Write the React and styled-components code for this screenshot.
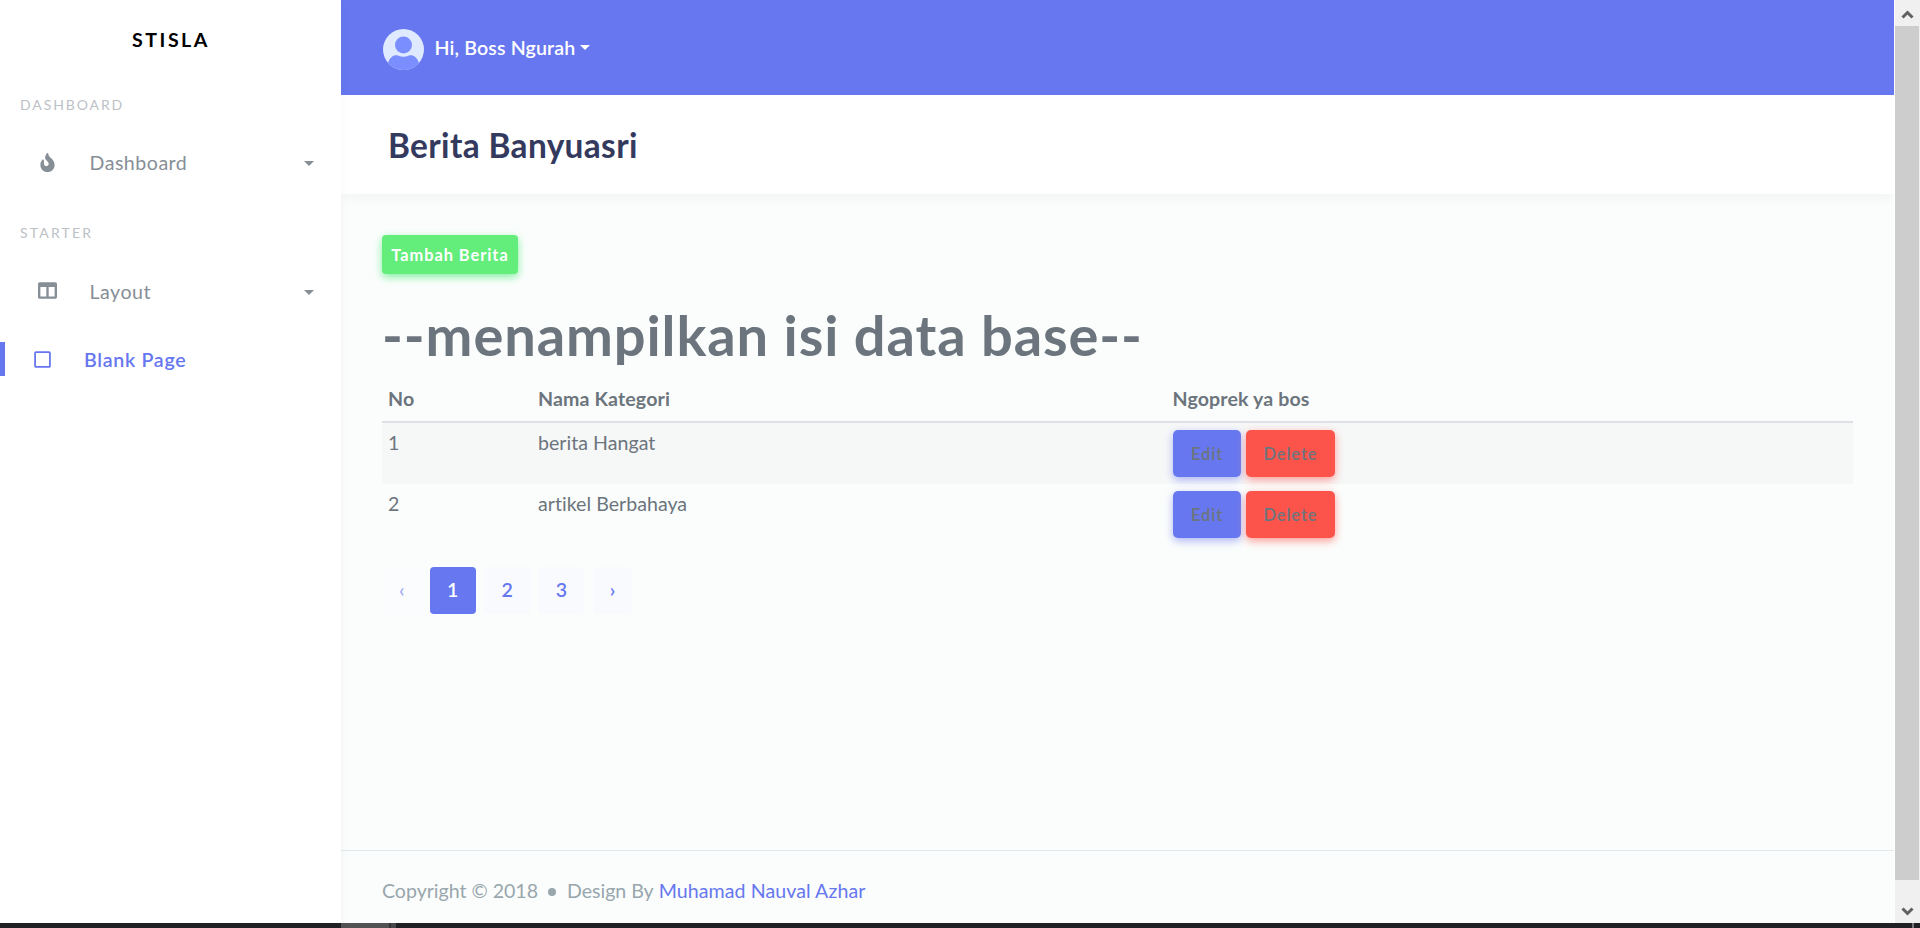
import React from "react";
import styled, { createGlobalStyle, css } from "styled-components";
import { FaFire, FaColumns, FaRegSquare } from "react-icons/fa";

const Global = createGlobalStyle`
  *, *::before, *::after { box-sizing: border-box; }
  body {
    margin: 0;
    overflow: hidden;
    font-family: Lato, "Open Sans", sans-serif;
    font-size: 19.6px;
    line-height: 28px;
    color: #6c757d;
    background: #fff;
  }
`;

const Screen = styled.div`
  display: flex;
  flex-direction: column;
  height: 928px;
`;
const Page = styled.div`
  display: flex;
  height: 923px;
`;

const Sidebar = styled.aside`
  position: relative;
  width: 341px;
  flex: none;
  background: #fff;
  box-shadow: 0 5px 11px rgba(0, 0, 0, 0.04);
`;
const Brand = styled.div`
  height: 81px;
  padding-left: 1px;
  line-height: 79px;
  text-align: center;
  font-size: 19.6px;
  font-weight: 700;
  letter-spacing: 2.5px;
  color: #000;
`;
const MenuHeader = styled.div`
  height: ${(p) => (p.$first ? 48 : 61)}px;
  padding: ${(p) => (p.$first ? 0 : 12)}px 20px 0;
  line-height: 48px;
  font-size: 14px;
  letter-spacing: ${(p) => (p.$first ? 1.9 : 2.2)}px;
  color: #bcc1c6;
`;
const MenuItem = styled.a`
  display: flex;
  align-items: center;
  height: 68px;
  padding: 0 27px 0 27px;
  letter-spacing: 0.5px;
  color: #868e96;
  ${(p) =>
    p.$active &&
    css`
      padding-left: 0;
      font-weight: 600;
      letter-spacing: 0.7px;
      color: #6777ef;
      &::before {
        content: "";
        width: 5px;
        height: 34px;
        margin: -2px 16.5px 0 0;
        background: #6777ef;
      }
    `}
`;
const IconSlot = styled.span`
  display: flex;
  justify-content: center;
  width: 41px;
  margin: -${(p) => p.$lift || 0}px 21.5px 0 0;
  svg { display: block; width: auto; height: 19px; }
`;
const MenuLabel = styled.span`
  flex: 1;
`;
const Caret = styled.span`
  border: 5.7px solid transparent;
  border-top-color: currentColor;
  border-bottom: 0;
`;

const Main = styled.main`
  display: flex;
  flex-direction: column;
  width: 1553px;
  flex: none;
  background: #fbfdfc;
`;
const Navbar = styled.header`
  display: flex;
  height: 95px;
  flex: none;
  padding: 29px 0 0 42px;
  background: #6777ef;
`;
const User = styled.div`
  display: flex;
  height: 41px;
  color: #fff;
  font-weight: 600;
  letter-spacing: 0.13px;
`;
const Avatar = styled.svg`
  width: 41px;
  height: 41px;
  margin-right: 10.5px;
`;
const UserName = styled.div`
  display: flex;
  align-items: center;
  gap: 5px;
  height: 37px;
`;
const TitleBar = styled.section`
  height: 99px;
  flex: none;
  padding-left: 47px;
  background: #fff;
  box-shadow: 0 5px 11px rgba(0, 0, 0, 0.035);
`;
const Title = styled.h1`
  margin: 0;
  font-size: 33.4px;
  line-height: 101px;
  font-weight: 700;
  letter-spacing: 0.36px;
  color: #34395e;
`;
const Content = styled.section`
  flex: 1;
  padding: 41px 41px 0;
`;
const tones = {
  primary: ["#6777ef", "#acb5f6"],
  danger: ["#fc544b", "#fd9b96"],
  success: ["#63ed7a", "#81f0a0"],
};
const Button = styled.a`
  display: flex;
  align-items: center;
  justify-content: center;
  height: ${(p) => (p.$small ? 39 : 47)}px;
  width: ${(p) => p.$w}px;
  border-radius: ${(p) => (p.$small ? 4 : 5)}px;
  font-size: 16.4px;
  font-weight: ${(p) => (p.$small ? 700 : 600)};
  letter-spacing: 0.95px;
  color: ${(p) => (p.$small ? "#fff" : "inherit")};
  background: ${(p) => tones[p.$tone][0]};
  box-shadow: 0 3px 8px ${(p) => tones[p.$tone][1]};
`;
const Headline = styled.h2`
  margin: 28px 0 9px;
  font-size: 56px;
  line-height: 66px;
  font-weight: 700;
  letter-spacing: 0.9px;
`;
const TableRow = styled.div`
  display: grid;
  grid-template-columns: 150px 634.5px 1fr;
  height: 61px;
  padding: 6px 6px 0;
  letter-spacing: 0.02px;
  background: ${(p) => (p.$striped ? "#f6f7f7" : "transparent")};
`;
const TableHead = styled(TableRow)`
  height: 46px;
  padding-top: 8px;
  border-bottom: 2px solid #dee2e6;
  font-weight: 700;
  letter-spacing: 0.12px;
`;
const Actions = styled.div`
  display: flex;
  gap: 5px;
  padding: 1px 0 0 0.5px;
`;
const Pagination = styled.nav`
  display: flex;
  gap: 8.3px;
  margin-top: 22px;
`;
const PageLink = styled.a`
  width: ${(p) => (p.$arrow ? 39.5 : 46)}px;
  height: 47px;
  border-radius: 4px;
  line-height: 46px;
  text-align: center;
  font-weight: 600;
  color: ${(p) => (p.$active ? "#fff" : p.$disabled ? "#a5affa" : "#6777ef")};
  background: ${(p) => (p.$active ? "#6777ef" : p.$disabled ? "#fbfcfd" : "#f9fafe")};
`;
const Footer = styled.footer`
  display: flex;
  align-items: center;
  height: 73px;
  padding: 8px 0 0 41px;
  border-top: 1px solid #e3eaef;
  letter-spacing: -0.03px;
  color: #98a6ad;
`;
const Bullet = styled.i`
  width: 8px;
  height: 8px;
  margin: 2px 11px 0 10px;
  border-radius: 50%;
  background: #98a6ad;
`;
const FooterLink = styled.a`
  margin-left: 5px;
  letter-spacing: 0.07px;
  color: #6777ef;
`;

const Scrollbar = styled.div`
  display: flex;
  flex-direction: column;
  width: 26px;
  padding: 0 1px;
  background: linear-gradient(to right, #fff 1px, #f0f0f0 1px);
`;
const ScrollArrow = styled.svg`
  width: 24px;
  height: 26px;
  margin-top: ${(p) => (p.$down ? "auto" : 0)};
`;
const Thumb = styled.div`
  height: 854px;
  background: #cdcdcd;
`;
const Taskbar = styled.div`
  display: flex;
  height: 5px;
  padding-left: 341px;
  background: #202125;
`;
const TaskSegment = styled.div`
  width: ${(p) => p.$w}px;
  margin-left: ${(p) => p.$gap || 0};
  margin-right: ${(p) => p.$end || 0}px;
  background: ${(p) => p.$c};
`;

const rows = [
  { no: 1, name: "berita Hangat" },
  { no: 2, name: "artikel Berbahaya" },
];

export default function App() {
  return (
    <Screen>
      <Global />
      <Page>
        <Sidebar>
          <Brand>STISLA</Brand>
          <MenuHeader $first>DASHBOARD</MenuHeader>
          <MenuItem>
            <IconSlot $lift={1}><FaFire /></IconSlot>
            <MenuLabel>Dashboard</MenuLabel>
            <Caret />
          </MenuItem>
          <MenuHeader>STARTER</MenuHeader>
          <MenuItem>
            <IconSlot $lift={3}><FaColumns /></IconSlot>
            <MenuLabel>Layout</MenuLabel>
            <Caret />
          </MenuItem>
          <MenuItem $active>
            <IconSlot $lift={2}><FaRegSquare /></IconSlot>
            <MenuLabel>Blank Page</MenuLabel>
          </MenuItem>
        </Sidebar>
        <Main>
          <Navbar>
            <User>
              <Avatar viewBox="0 0 41 41">
                <defs>
                  <clipPath id="round"><circle cx="20.5" cy="20.5" r="20.5" /></clipPath>
                </defs>
                <g clipPath="url(#round)">
                  <rect width="41" height="41" fill="#dfe9ff" />
                  <circle cx="20.5" cy="16" r="8.5" fill="#7b8eff" />
                  <path d="M5 41V34C7 28 11 25.5 15 26.5Q20.5 29 26 26.5C30 25.5 34 28 36 34V41Z" fill="#7b8eff" />
                </g>
              </Avatar>
              <UserName>Hi, Boss Ngurah <Caret /></UserName>
            </User>
          </Navbar>
          <TitleBar><Title>Berita Banyuasri</Title></TitleBar>
          <Content>
            <Button $small $tone="success" $w={136}>Tambah Berita</Button>
            <Headline>--menampilkan isi data base--</Headline>
            <TableHead>
              <span>No</span>
              <span>Nama Kategori</span>
              <span>Ngoprek ya bos</span>
            </TableHead>
            {rows.map((r, i) => (
              <TableRow key={r.no} $striped={i % 2 === 0}>
                <span>{r.no}</span>
                <span>{r.name}</span>
                <Actions>
                  <Button $tone="primary" $w={68}>Edit</Button>
                  <Button $tone="danger" $w={89}>Delete</Button>
                </Actions>
              </TableRow>
            ))}
            <Pagination>
              <PageLink $arrow $disabled>‹</PageLink>
              <PageLink $active>1</PageLink>
              <PageLink>2</PageLink>
              <PageLink>3</PageLink>
              <PageLink $arrow>›</PageLink>
            </Pagination>
          </Content>
          <Footer>
            <span>Copyright © 2018</span>
            <Bullet />
            <span>Design By</span>
            <FooterLink>Muhamad Nauval Azhar</FooterLink>
          </Footer>
        </Main>
        <Scrollbar>
          <ScrollArrow viewBox="0 0 24 26">
            <path d="M7.5 17.5L12.5 12.5L17.5 17.5" fill="none" stroke="#606060" strokeWidth="3" />
          </ScrollArrow>
          <Thumb />
          <ScrollArrow viewBox="0 0 24 26" $down>
            <path d="M7.5 11.5L12.5 16.5L17.5 11.5" fill="none" stroke="#606060" strokeWidth="3" />
          </ScrollArrow>
        </Scrollbar>
      </Page>
      <Taskbar>
        <TaskSegment $w={48} $c="#525255" />
        <TaskSegment $w={2} $c="#343437" />
        <TaskSegment $w={5} $c="#48484b" />
        <TaskSegment $w={2} $c="#77777a" $gap="auto" $end={6} />
      </Taskbar>
    </Screen>
  );
}
